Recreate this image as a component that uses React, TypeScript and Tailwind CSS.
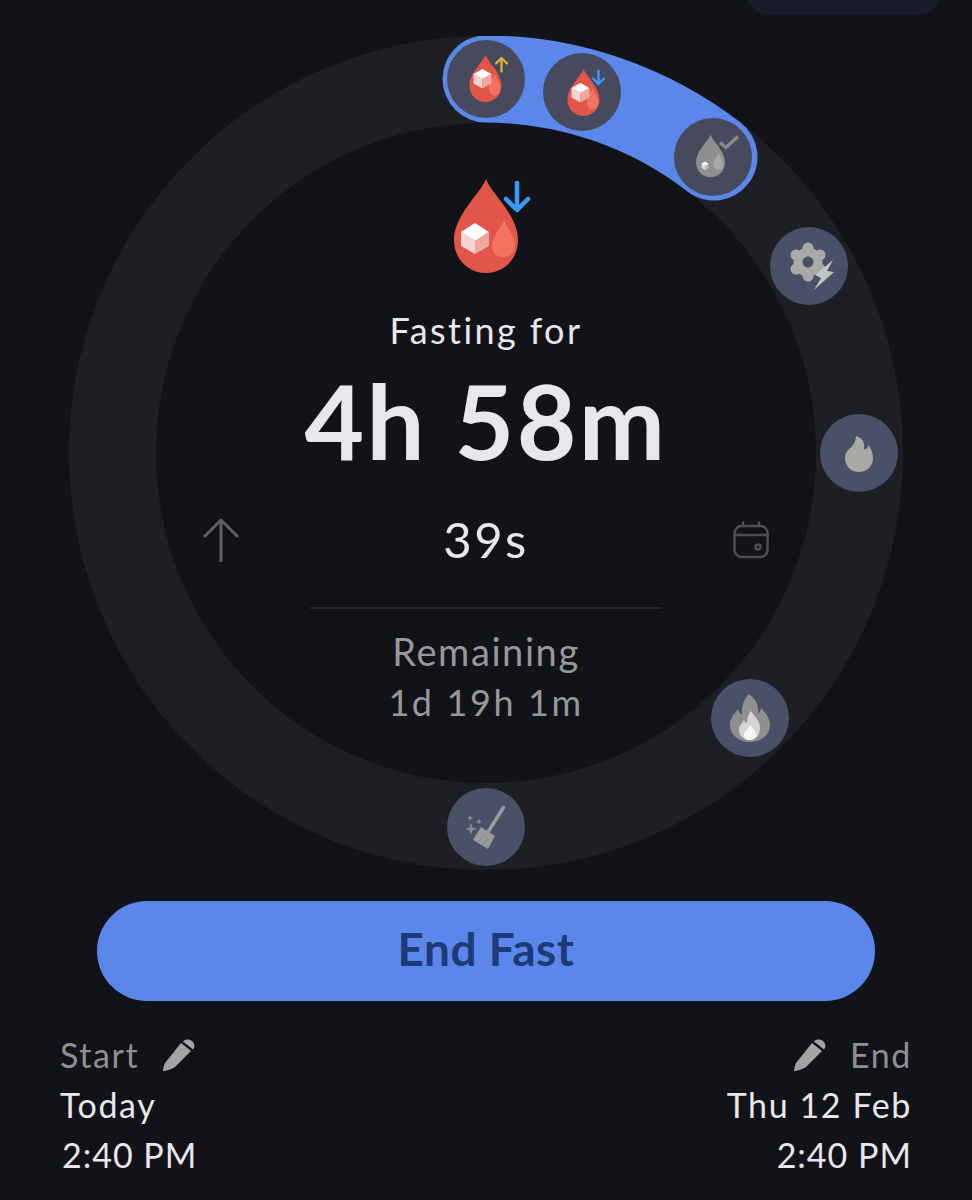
import React from "react";

const Drop = ({ mono = false, mini = false, className = "" }: { mono?: boolean; mini?: boolean; className?: string }) => {
  const body = mono ? "#8f8f8f" : "#e2554b";
  const small = mono ? "#a8a8a8" : "#f2735f";
  return (
    <svg viewBox="0 0 64 94" className={className}>
      <path d="M32 0C37 14 64 36 64 61C64 80 50 94 32 94C14 94 0 80 0 61C0 36 27 14 32 0Z" fill={body} />
      {mini ? (
        <path d="M50 38C54 48 62 56 62 66C62 75 57 81 50 81C43 81 39 75 39 66C39 56 46 48 50 38Z" fill={small} />
      ) : (
        <path d="M50 41C54 50 61 58 61 66C61 73 56 78 49 78C42 78 38 73 38 66C38 58 46 50 50 41Z" fill={small} />
      )}
      {!mono && !mini && (
        <g>
          <path d="M21 44L35 53L21 62L7 53Z" fill="#fff" />
          <path d="M7 53L21 62V75L7 67Z" fill="#f8d5d0" />
          <path d="M35 53L21 62V75L35 67Z" fill="#f2a79e" />
        </g>
      )}
      {!mono && mini && (
        <g>
          <path d="M26 28L44 38L26 48L8 38Z" fill="#fff" />
          <path d="M8 38L26 48V67L8 57Z" fill="#f8d5d0" />
          <path d="M44 38L26 48V67L44 57Z" fill="#f2a79e" />
        </g>
      )}
      {mono && (
        <g>
          <path d="M20 59L28 64L20 69L12 64Z" fill="#fff" />
          <path d="M12 64L20 69V78L12 73Z" fill="#ddd" />
          <path d="M28 64L20 69V78L28 73Z" fill="#bbb" />
        </g>
      )}
    </svg>
  );
};

const ArrowMark = ({ dir, color, className = "" }: { dir: "up" | "down"; color: string; className?: string }) => (
  <svg viewBox="0 0 28 34" className={className} fill="none" stroke={color} strokeWidth="4.5" strokeLinecap="round" strokeLinejoin="round">
    {dir === "down" ? <path d="M14 3V30M3 19L14 30L25 19" /> : <path d="M14 31V4M3 15L14 4L25 15" />}
  </svg>
);

const Pencil = () => (
  <svg viewBox="0 0 34 34" className="w-[34px] h-[34px]">
    <path d="M1 33C1 31 2 27 3 25L19 5L29 13L13 29C10 31 4 33 1 33Z" fill="#a3a3a3" />
    <path d="M21 3.5C23 1 27 1 30 3C33 6 33 9 31 11.5Z" fill="#a3a3a3" />
  </svg>
);

const Node = ({ pos, bg, children }: { pos: string; bg: string; children: React.ReactNode }) => (
  <div className={`absolute w-[78px] h-[78px] rounded-full flex items-center justify-center ${pos} ${bg}`}>{children}</div>
);

export default function App() {
  return (
    <div
      className="relative w-[972px] h-[1200px] overflow-hidden bg-[#111318] text-[#e9e7ec]"
      style={{ fontFamily: '"Lato", "Noto Sans", sans-serif' }}
    >
      <div className="absolute left-[745px] -top-[45px] w-[196px] h-[60px] rounded-[24px] bg-[#181c2a]" />

      <div className="pt-[36px] flex flex-col items-center">
        <div className="relative w-[834px] h-[834px] rounded-full border-[87px] border-[#1e1f24] box-border">
          <div className="flex flex-col items-center pt-[56px]">
            <div className="relative w-[80px] h-[94px]">
              <Drop className="absolute left-[8px] top-0 w-[64px] h-[94px]" />
              <ArrowMark dir="down" color="#3b9cf5" className="absolute left-[57px] top-[1px] w-[28px] h-[34px]" />
            </div>
            <div className="mt-[33px] text-[36px] leading-[48px] tracking-[2.4px]">Fasting for</div>
            <div className="mt-[16px] text-[103px] leading-[100px] font-bold tracking-[2.4px] whitespace-nowrap">4h 58m</div>
            <div className="mt-[40px] w-[566px] h-[60px] flex items-center justify-between">
              <svg viewBox="0 0 36 44" className="w-[36px] h-[44px]" fill="none" stroke="#5f6064" strokeWidth="3" strokeLinecap="round" strokeLinejoin="round">
                <path d="M18 43V2M2 18L18 2L34 18" />
              </svg>
              <div className="-mt-[3px] text-[49px] leading-[56px] tracking-[2.4px]">39s</div>
              <svg viewBox="0 0 36 38" className="w-[36px] h-[38px]" fill="none" stroke="#4e4f54" strokeWidth="2.5" strokeLinecap="round" strokeLinejoin="round">
                <rect x="1.5" y="5" width="33" height="31" rx="7" />
                <path d="M1.5 14H34.5M10 1.5V5M26 1.5V5" />
                <circle cx="25" cy="26" r="2.5" />
              </svg>
            </div>
            <div className="mt-[37px] w-[352px] h-[2px] bg-[#26272c]" />
            <div className="mt-[18px] text-[38px] leading-[48px] tracking-[1.6px] text-[#98989c]">Remaining</div>
            <div className="mt-[4px] text-[36px] leading-[46px] tracking-[2.6px] text-[#98989c]">1d 19h 1m</div>
          </div>

          <svg className="absolute -left-[87px] -top-[87px] w-[834px] h-[834px] pointer-events-none" viewBox="0 0 834 834" fill="none">
            <path d="M417 43A374 374 0 0 1 645 121" stroke="#5b86ea" strokeWidth="87" strokeLinecap="round" />
          </svg>

          <Node pos="left-[291px] -top-[83px]" bg="bg-[#464a5c]">
            <div className="relative w-[50px] h-[52px]">
              <Drop mini className="absolute left-[8px] top-[2px] w-[33px] h-[47px]" />
              <ArrowMark dir="up" color="#e2b23f" className="absolute left-[33px] top-[3px] w-[15px] h-[17px]" />
            </div>
          </Node>
          <Node pos="left-[387px] -top-[70px]" bg="bg-[#464a5c]">
            <div className="relative w-[50px] h-[52px]">
              <Drop mini className="absolute left-[10px] top-[3px] w-[33px] h-[47px]" />
              <ArrowMark dir="down" color="#3b9cf5" className="absolute left-[34px] top-[3px] w-[15px] h-[17px]" />
            </div>
          </Node>
          <Node pos="left-[518px] -top-[5px]" bg="bg-[#464a5c]">
            <div className="relative w-[50px] h-[52px]">
              <Drop mono className="absolute left-[8px] top-[3px] w-[29px] h-[44px]" />
              <svg viewBox="0 0 20 14" className="absolute left-[31px] top-[4px] w-[20px] h-[15px]" fill="none" stroke="#8a8a8a" strokeWidth="3.5">
                <path d="M1 7L7 12L19 1" />
              </svg>
            </div>
          </Node>
          <Node pos="left-[614px] top-[104px]" bg="bg-[#4a5068]">
            <svg viewBox="0 0 46 50" className="w-[46px] h-[50px] ml-[8px] mt-[2px]">
              <circle cx="18" cy="20" r="14.500" fill="#a9a9a6" />
              <circle cx="18" cy="6" r="5.500" fill="#a9a9a6" />
              <circle cx="30" cy="13" r="5.500" fill="#a9a9a6" />
              <circle cx="30" cy="27" r="5.500" fill="#a9a9a6" />
              <circle cx="18" cy="34" r="5.500" fill="#a9a9a6" />
              <circle cx="6" cy="27" r="5.500" fill="#a9a9a6" />
              <circle cx="6" cy="13" r="5.500" fill="#a9a9a6" />
              <circle cx="18" cy="20" r="5.500" fill="#4a5068" />
              <path d="M43 18L37 29L44 30L24 48L31 36L25 33Z" fill="#c4c4c2" />
            </svg>
          </Node>
          <Node pos="left-[664px] top-[291px]" bg="bg-[#4a5068]">
            <svg viewBox="0 0 28 36" className="w-[28px] h-[36px] mt-[1px]">
              <path d="M11 0C18 2 20 7 19 13C22 14 23 11 23 9C26 12 28 17 28 22C28 30 22 36 14 36C6 36 0 30 0 22C0 15 5 13 8 9C10 6 11 3 11 0Z" fill="#a9a9a6" />
            </svg>
          </Node>
          <Node pos="left-[555px] top-[556px]" bg="bg-[#4a5068]">
            <svg viewBox="0 0 40 48" className="w-[40px] h-[48px]">
              <path d="M19 0C27 6 29 13 28 20C30 18 31 16 31 14C36 19 40 25 40 31C40 41 31 48 20 48C9 48 0 41 0 31C0 24 4 20 8 15C9 18 10 20 12 21C11 13 14 5 19 0Z" fill="#8f8f8f" />
              <path d="M21 17C25 23 30 27 30 34C30 41 26 46 20 46C14 46 9 42 9 36C9 31 12 30 14 26C15 28 16 29 17 29C17 25 18 21 21 17Z" fill="#d6d6d6" />
              <path d="M20 31C23 35 26 37 26 41C26 44 23 46 20 46C16 46 14 44 14 41C14 37 18 35 20 31Z" fill="#f7f7f7" />
            </svg>
          </Node>
          <Node pos="left-[291px] top-[665px]" bg="bg-[#4a5068]">
            <svg viewBox="0 0 40 43" className="w-[40px] h-[43px]">
              <path d="M37.5 1.500L22 26" stroke="#9a9a9a" strokeWidth="3.5" strokeLinecap="round" />
              <path d="M15 21L29 30L22 43L7 34Z" fill="#9a9a9a" />
              <path d="M17 30L11 37M22 32L16 40" stroke="#7f8290" strokeWidth="1" />
              <path d="M5 17L6.500 21.500L11 23L6.500 24.500L5 29L3.500 24.500L-1 23L3.500 21.500Z" fill="#8a8a8a" />
              <path d="M4 9L5 11L7 12L5 13L4 15L3 13L1 12L3 11Z" fill="#8a8a8a" />
              <path d="M13 13L14 14.500L15.500 15.500L14 16.500L13 18L12 16.500L10.500 15.500L12 14.500Z" fill="#8a8a8a" />
            </svg>
          </Node>
        </div>

        <button className="mt-[31px] w-[778px] h-[100px] pb-[5px] rounded-full bg-[#5b86ea] text-[#1e3a78] text-[46px] font-bold tracking-[0.5px]">
          End Fast
        </button>
      </div>

      <div className="mt-[29px] px-[60px] flex justify-between text-[34px] leading-[50px] tracking-[1.6px]">
        <div className="flex flex-col items-start">
          <div className="flex items-center gap-[23px] text-[#8f8f93]">
            <span>Start</span>
            <Pencil />
          </div>
          <div>Today</div>
          <div className="tracking-[1px] ml-[2px]">2:40 PM</div>
        </div>
        <div className="flex flex-col items-end">
          <div className="flex items-center gap-[23px] text-[#8f8f93]">
            <Pencil />
            <span>End</span>
          </div>
          <div>Thu 12 Feb</div>
          <div className="tracking-[1px]">2:40 PM</div>
        </div>
      </div>
    </div>
  );
}
